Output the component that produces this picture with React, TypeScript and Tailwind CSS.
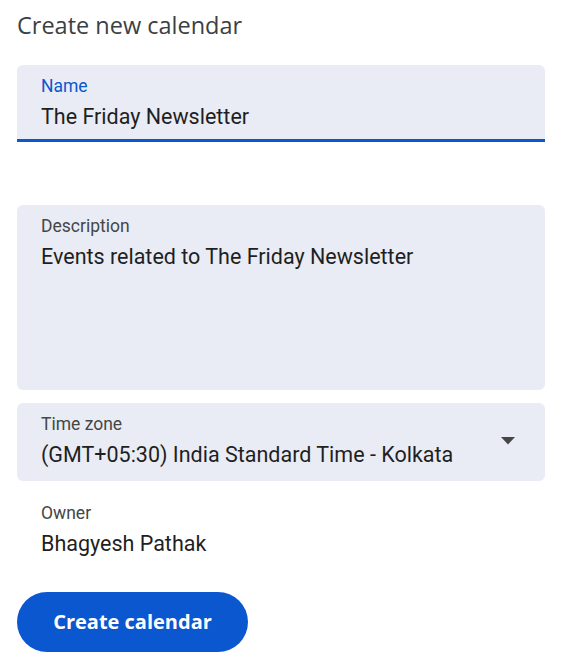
export default function App() {
  return (
    <div className="w-[576px] h-[669px] bg-white font-['Roboto',sans-serif] text-[#1f1f1f] overflow-hidden">
      <div className="flex flex-col pl-[17px] pr-[31px]">
        {/* title */}
        <h1 className="mt-[9px] h-[32px] text-[23.5px] leading-[32px] text-[#3c4043] font-['Open_Sans',sans-serif]">
          Create new calendar
        </h1>

        {/* name field, focused */}
        <div className="mt-[24px] h-[77px] rounded-t-[6px] bg-[#e9ecf4] border-b-[3px] border-[#0b57d0] px-6 pt-[9px]">
          <div className="text-[17.5px] leading-[24px] text-[#0b57d0]">Name</div>
          <div className="mt-[5px] text-[21.5px] leading-[28px]">The Friday Newsletter</div>
        </div>

        {/* description */}
        <div className="mt-[63px] h-[185px] rounded-[6px] bg-[#e9ecf4] px-6 pt-[9px]">
          <div className="text-[17.5px] leading-[24px] text-[#444746]">Description</div>
          <div className="mt-[5px] text-[21.5px] leading-[28px]">Events related to The Friday Newsletter</div>
        </div>

        {/* time zone */}
        <div className="mt-[13px] h-[78px] rounded-[6px] bg-[#e9ecf4] pl-6 pr-[29px] pt-[9px] flex items-start justify-between">
          <div>
            <div className="text-[17.5px] leading-[24px] text-[#444746]">Time zone</div>
            <div className="mt-[5px] text-[21.5px] leading-[28px]">(GMT+05:30) India Standard Time - Kolkata</div>
          </div>
          <svg width="16" height="8" viewBox="0 0 16 8" className="mt-[25px]">
            <path d="M1 0h14L8 7.5z" fill="#444746" />
          </svg>
        </div>

        {/* owner */}
        <div className="mt-[20px] px-6">
          <div className="text-[17.5px] leading-[24px] text-[#444746]">Owner</div>
          <div className="mt-[5px] text-[21.5px] leading-[28px]">Bhagyesh Pathak</div>
        </div>

        <div className="mt-[34px]">
          <button className="h-[60px] w-[231px] rounded-full bg-[#0b57d0] text-white text-[20px] font-bold font-['Open_Sans',sans-serif]">
            Create calendar
          </button>
        </div>
      </div>
    </div>
  );
}
